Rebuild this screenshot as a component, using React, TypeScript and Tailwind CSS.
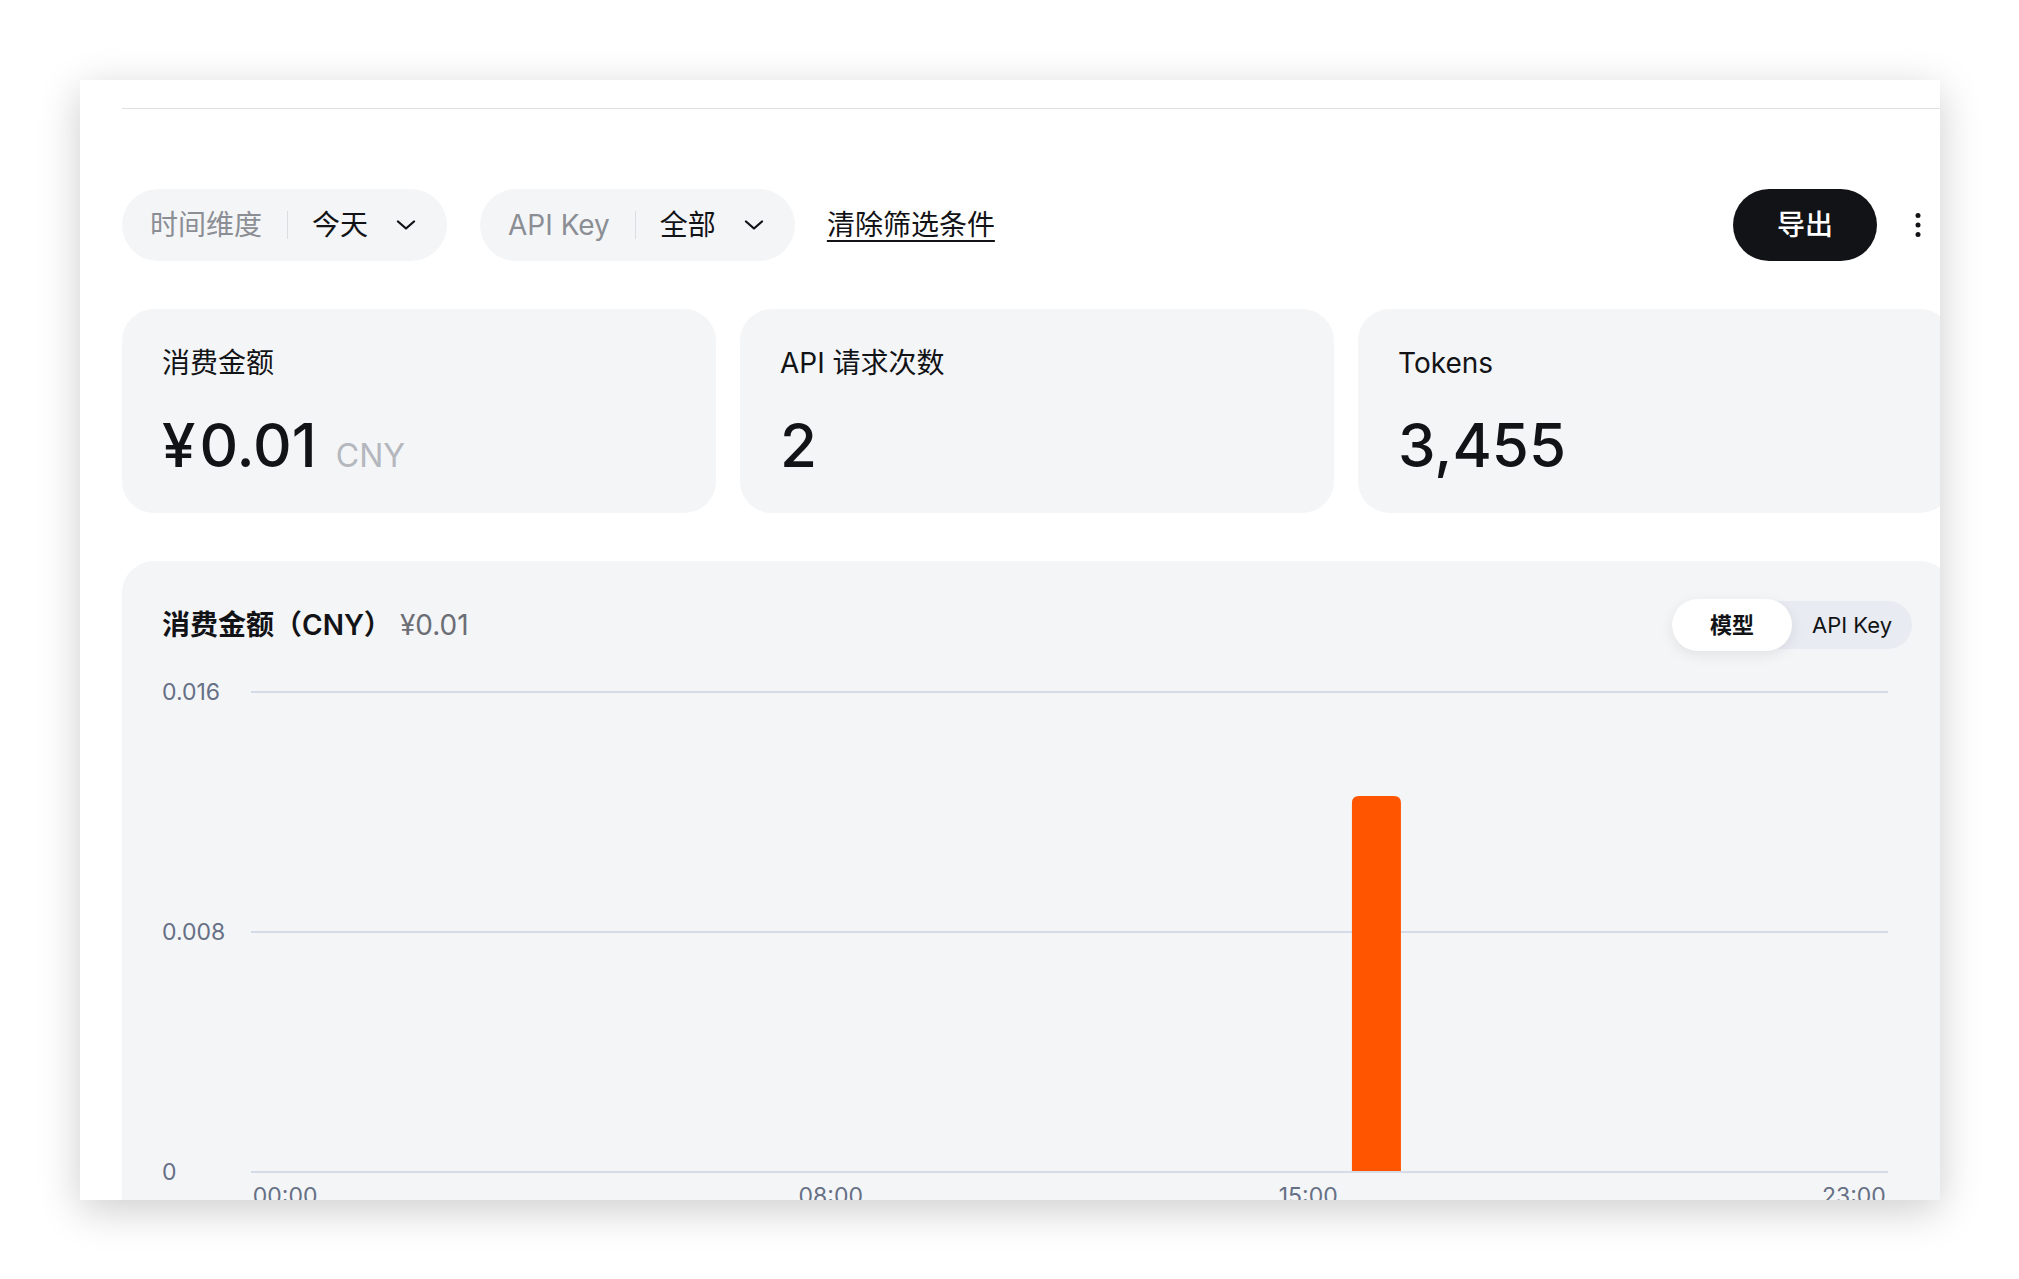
const font = "font-['Inter','Noto_Sans_CJK_SC',sans-serif]";

// hourly spend, index = hour of day
const hourly: number[] = Array.from({ length: 24 }, (_, h) => (h === 16 ? 0.0125 : 0));
const yMax = 0.016;
const plotW = 1637;
const plotH = 480;
const top = 14;

const xLabels: Record<number, string> = { 0: "00:00", 8: "08:00", 15: "15:00", 23: "23:00" };

function Chevron() {
  return (
    <svg width="20" height="10" viewBox="0 0 20 10" fill="none" className="shrink-0">
      <path d="M2 1.5 10 8.5 18 1.5" stroke="#121316" strokeWidth="2.3" strokeLinecap="round" strokeLinejoin="round" />
    </svg>
  );
}

function Kebab() {
  return (
    <svg width="6" height="26" viewBox="0 0 6 26" fill="#121316">
      <circle cx="3" cy="3.5" r="2.5" />
      <circle cx="3" cy="13" r="2.5" />
      <circle cx="3" cy="22.5" r="2.5" />
    </svg>
  );
}

function FilterPill({ label, value }: { label: string; value: string }) {
  return (
    <div className="flex h-[72px] items-center rounded-full bg-[#f4f5f7] pl-[28px] pr-[31px]">
      <span className="text-[28px] leading-[40px] text-[#8b8e94]">{label}</span>
      <span className="ml-[25px] mr-[24px] h-[28px] w-px bg-[#dcdde1]" />
      <span className="text-[28px] leading-[40px] text-[#121316]">{value}</span>
      <span className="ml-[28px] flex">
        <Chevron />
      </span>
    </div>
  );
}

function StatCard({ title, children }: { title: string; children: React.ReactNode }) {
  return (
    <div className="h-[204px] rounded-[32px] bg-[#f4f5f7] px-10 pt-[34px]">
      <div className="text-[28px] leading-[40px] text-[#121316]">{title}</div>
      <div className="mt-[32px] flex items-baseline gap-[19px]">{children}</div>
    </div>
  );
}

function SpendChart() {
  const band = plotW / 24;
  const barW = 49;
  const base = top + plotH;
  return (
    <div className="mt-[27px] flex">
      <div className="flex w-[89px] shrink-0 flex-col gap-[212px] text-[23px] leading-[28px] text-[#667085]">
        <span>0.016</span>
        <span>0.008</span>
        <span>0</span>
      </div>
      <div className="mr-6 flex-1">
        <svg width="100%" height="496" viewBox={`0 0 ${plotW} 496`} preserveAspectRatio="none" className="block">
          {[0, 0.5, 1].map((f) => (
            <rect key={f} x="0" y={top - 1 + plotH * f} width={plotW} height="2" fill="#d5dbe7" />
          ))}
          {hourly.map((v, h) => {
            if (!v) return null;
            const hgt = (v / yMax) * plotH;
            const x = h * band + (band - barW) / 2;
            const y = base - 1 - hgt;
            const r = 7;
            return (
              <path
                key={h}
                fill="#ff5500"
                d={`M${x} ${base - 1} V${y + r} Q${x} ${y} ${x + r} ${y} H${x + barW - r} Q${x + barW} ${y} ${x + barW} ${y + r} V${base - 1} Z`}
              />
            );
          })}
        </svg>
        <div className="mt-[8px] grid grid-cols-24 text-[23px] leading-[28px] text-[#667085]">
          {hourly.map((_, h) => (
            <span key={h} className="whitespace-nowrap text-center">
              {xLabels[h] ?? ""}
            </span>
          ))}
        </div>
      </div>
    </div>
  );
}

export default function App() {
  return (
    <main className={`min-h-screen bg-white pl-[80px] pt-[80px] ${font}`}>
      <div className="h-[1120px] w-[1860px] overflow-hidden bg-white shadow-[0_10px_40px_rgba(0,0,0,0.2)]">
        <div className="ml-[42px] w-[1830px] pt-[28px]">
          <div className="h-px bg-[#e0e0e0]" />

          {/* filters */}
          <div className="mt-20 flex items-center pr-[14px]">
            <FilterPill label="时间维度" value="今天" />
            <div className="ml-[33px]">
              <FilterPill label="API Key" value="全部" />
            </div>
            <button className="ml-[32px] text-[28px] leading-[40px] text-[#121316] underline decoration-2 underline-offset-[5px]">
              清除筛选条件
            </button>
            <button className="ml-auto h-[72px] w-[144px] rounded-full bg-[#121316] text-[28px] font-medium text-white">
              导出
            </button>
            <div className="ml-[21px] flex h-10 w-10 items-center justify-center">
              <Kebab />
            </div>
          </div>

          {/* totals */}
          <div className="mt-12 grid grid-cols-3 gap-6">
            <StatCard title="消费金额">
              <span className="text-[60px] font-medium leading-[60px] text-[#121316]">
                <span className="mr-[4px]">¥</span>0.01
              </span>
              <span className="text-[32px] leading-[40px] text-[#b4b7bd]">CNY</span>
            </StatCard>
            <StatCard title="API 请求次数">
              <span className="text-[60px] font-medium leading-[60px] text-[#121316]">2</span>
            </StatCard>
            <StatCard title="Tokens">
              <span className="text-[60px] font-medium leading-[60px] text-[#121316]">3,455</span>
            </StatCard>
          </div>

          {/* spend chart */}
          <div className="mt-12 h-[700px] rounded-[32px] bg-[#f4f5f7] px-10 pt-[38px]">
            <div className="flex h-[52px] items-center justify-between">
              <div className="flex items-baseline">
                <span className="text-[28px] font-semibold leading-[40px] text-[#121316]">消费金额（CNY）</span>
                <span className="ml-[8px] text-[28px] leading-[40px] text-[#6b6e75]">¥0.01</span>
              </div>
              <div className="flex h-[48px] w-[240px] items-center rounded-full bg-[#e8ebf1]">
                <span className="flex h-[52px] w-[120px] items-center justify-center rounded-full bg-white text-[22px] font-semibold text-[#121316] shadow-[0_4px_14px_rgba(0,0,0,0.08)]">
                  模型
                </span>
                <span className="w-[120px] text-center text-[22px] text-[#121316]">API Key</span>
              </div>
            </div>
            <SpendChart />
          </div>
        </div>
      </div>
    </main>
  );
}
